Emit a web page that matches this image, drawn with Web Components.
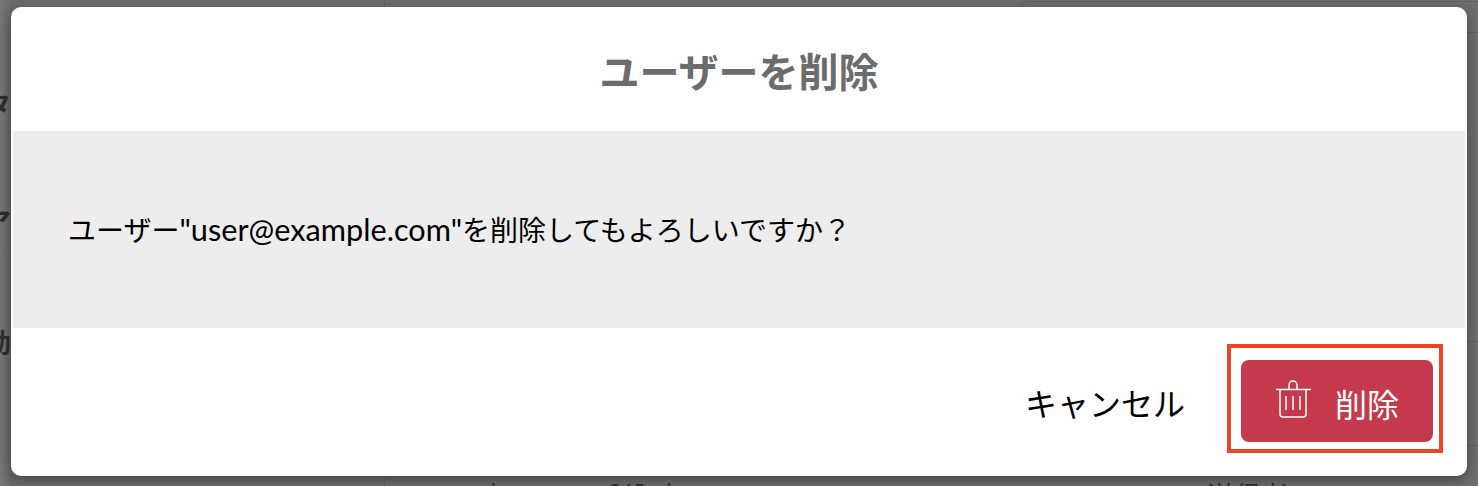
<!doctype html>
<html lang="ja"><head><meta charset="utf-8">
<style>html,body{margin:0;padding:0;width:1478px;height:486px;overflow:hidden;background:#6f6f6f}
body{font-family:"Lato","Noto Sans CJK JP",sans-serif}</style></head>
<body>
<page-backdrop></page-backdrop>
<confirm-dialog heading="ユーザーを削除">
  ユーザー<latin-text>"user@example.com"</latin-text>を削除してもよろしいですか？
  <dialog-actions slot="actions">
    <plain-button>キャンセル</plain-button>
    <highlight-frame><danger-button>削除</danger-button></highlight-frame>
  </dialog-actions>
</confirm-dialog>
<script>
function def(name, html, props){
  customElements.define(name, class extends HTMLElement{
    constructor(){super();this.attachShadow({mode:'open'}).innerHTML=html;}
    connectedCallback(){ if(props) props(this); }
  });
}
const F='"Noto Sans CJK JP",sans-serif';
def('page-backdrop',`<style>
:host{position:absolute;inset:0;display:block;overflow:hidden;background:#6f6f6f;color:#2f2f2f;font:700 27px "Noto Sans CJK JP",sans-serif}
.shade{position:absolute;inset:0;background:linear-gradient(90deg,#787878 0,#6a6a6a 11px,#6f6f6f 30px)}
.v{position:absolute;left:384px;top:0;bottom:0;width:1px;background:#666}
.card{position:absolute;left:1020px;top:1px;right:-10px;height:30px;border:1px solid #636363;border-radius:8px 0 0 0}
span{position:absolute;line-height:1;white-space:nowrap}
.rl{position:absolute;left:1467px;right:0;height:1px;background:#5f5f5f}
.n{font:400 21px/1 Lato,sans-serif;top:480px}
</style><div class="shade"></div><div class="v"></div><div class="card"></div>
<div class="rl" style="top:341px"></div><div class="rl" style="top:445px"></div>
<span style="left:-16px;top:90px">タ</span>
<span style="left:-16px;top:207px">ア</span>
<span style="left:-16px;top:328px">効</span>
<span class="n" style="left:491px">l</span><span class="n" style="left:565px">o</span><span class="n" style="left:609px">365</span><span class="n" style="left:660px">d</span>
<span style="left:1207px;top:481px;font-weight:400;font-size:27px">送信者</span>`);
def('latin-text',`<style>
:host{display:inline;font:400 30.7px Lato,sans-serif}
</style><slot></slot>`);
def('confirm-dialog',`<style>
:host{position:absolute;left:11px;top:7px;width:1456px;height:469px;box-sizing:border-box;display:flex;flex-direction:column;background:#fff;border-radius:10px;box-shadow:0 4px 14px rgba(0,0,0,.4);font-family:${F}}
h2{margin:0;height:124px;padding-top:2px;box-sizing:border-box;flex:none;display:flex;align-items:center;justify-content:center;font:700 40px/1 "Noto Sans CJK JP",sans-serif;color:#6c6c6c}
.body{margin:0 2px;height:197px;flex:none;background:#ededed;padding:0 55px 2px;font-size:28px;color:#000;box-sizing:border-box;display:flex;align-items:center}
.body div{white-space:nowrap;padding-left:0}
.foot{flex:1;display:flex}
</style><h2></h2><div class="body"><div><slot></slot></div></div><div class="foot"><slot name="actions"></slot></div>`,
el=>{el.shadowRoot.querySelector('h2').textContent=el.getAttribute('heading');});
def('dialog-actions',`<style>
:host{flex:1;display:flex;justify-content:flex-end;align-items:center;padding:0 24px 7px 0;box-sizing:border-box;gap:43px}
</style><slot></slot>`);
def('plain-button',`<style>
:host{display:inline-block;font:400 32px/1 "Noto Sans CJK JP",sans-serif;color:#000;white-space:nowrap;margin:6px -1px 0 0}
</style><slot></slot>`);
def('highlight-frame',`<style>
:host{display:block;box-sizing:border-box;width:216px;height:109px;border:4px solid #ee4426;padding:12px 6px 7px 10px}
</style><slot></slot>`);
def('danger-button',`<style>
:host{display:flex;align-items:center;box-sizing:border-box;width:192px;height:82px;background:#c4394c;border-radius:8px;color:#fff;font:400 32px/1 "Noto Sans CJK JP",sans-serif;padding-left:34px}
svg{width:37px;height:38px;flex:none;margin-right:23px;margin-bottom:4px}
span{margin-top:4px}
</style><svg viewBox="0 0 37 38" fill="none" stroke="#fff" stroke-width="1.5"><path d="M1 9.5h35M5 10v24a3 3 0 0 0 3 3h20a3 3 0 0 0 3-3V10M14 9V5a4 4 0 0 1 8 0v4M11 16v14M18 16v14M25 16v14"/></svg><span><slot></slot></span>`);
</script>
</body></html>
